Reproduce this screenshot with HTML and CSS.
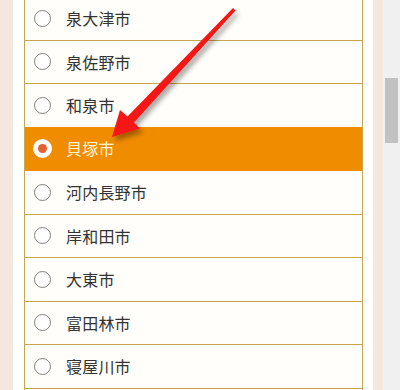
FILE: index.html
```html
<!DOCTYPE html>
<html lang="ja">
<head>
<meta charset="utf-8">
<link rel="stylesheet" href="styles.css">
</head>
<body>
<div class="page">
  <div class="side side-left"></div>
  <div class="gap gap-left"></div>
  <ul class="list">
    <li class="row"><span class="radio"></span><span class="label">泉大津市</span></li>
    <li class="row"><span class="radio"></span><span class="label">泉佐野市</span></li>
    <li class="row"><span class="radio"></span><span class="label">和泉市</span></li>
    <li class="row selected"><span class="radio"></span><span class="label">貝塚市</span></li>
    <li class="row"><span class="radio"></span><span class="label">河内長野市</span></li>
    <li class="row"><span class="radio"></span><span class="label">岸和田市</span></li>
    <li class="row"><span class="radio"></span><span class="label">大東市</span></li>
    <li class="row"><span class="radio"></span><span class="label">富田林市</span></li>
    <li class="row"><span class="radio"></span><span class="label">寝屋川市</span></li>
  </ul>
  <div class="gap gap-right"></div>
  <div class="side side-right"></div>
  <div class="scrollbar"><div class="thumb"></div></div>
</div>
<svg class="arrow" width="400" height="390" viewBox="0 0 400 390" xmlns="http://www.w3.org/2000/svg">
  <defs>
    <filter id="shadow" x="-20%" y="-20%" width="140%" height="140%">
      <feDropShadow dx="3" dy="4" stdDeviation="2.5" flood-color="#000" flood-opacity="0.35"/>
    </filter>
  </defs>
  <polygon filter="url(#shadow)" fill="#f51616" points="112,137 120,110 127.5,116.5 233,8 235.5,10.5 134,122.5 140,128.5"/>
</svg>
</body>
</html>
```
FILE: styles.css
```css
* { box-sizing: border-box; }
html, body {
  margin: 0;
  padding: 0;
  width: 400px;
  height: 390px;
  overflow: hidden;
  background: #ffffff;
  font-family: "Noto Sans CJK JP", "Noto Sans", sans-serif;
}
.page {
  display: flex;
  height: 390px;
  position: relative;
}
.side {
  background: #f4e7dd;
  flex: none;
}
.side-left { width: 13px; }
.side-right { width: 10px; }
.gap { flex: none; background: #ffffff; }
.gap-left { width: 11px; }
.gap-right { width: 10px; }
.list {
  list-style: none;
  margin: -3px 0 0 0;
  padding: 0;
  width: 339px;
  flex: none;
  border-left: 1px solid #c6a651;
  border-right: 1px solid #c6a651;
  background: #fffefa;
  align-self: stretch;
  height: 396px;
}
.row {
  height: 43.5px;
  border-bottom: 1px solid #c6a651;
  display: flex;
  align-items: center;
  padding-left: 9px;
  gap: 15px;
  color: #333333;
  font-size: 16px;
}
.row.selected {
  background: #f08c00;
  border-bottom-color: #f08c00;
  margin-top: -1px;
  height: 44.5px;
  color: #fff4d8;
}
.radio {
  width: 17px;
  height: 17px;
  border-radius: 50%;
  border: 1px solid #808080;
  background: #ffffff;
  flex: none;
  display: flex;
  align-items: center;
  justify-content: center;
}
.row.selected .radio {
  width: 19px;
  height: 19px;
  margin-left: -1px;
  margin-right: -1px;
  border: 1px solid #ffffff;
}
.row.selected .radio::after {
  content: "";
  width: 9px;
  height: 9px;
  border-radius: 50%;
  background: #e6622c;
}
.label {
  line-height: 1;
  letter-spacing: 0.2px;
}
.scrollbar {
  flex: none;
  width: 17px;
  background: #f0f0f0;
  padding: 78px 2px 0 2px;
}
.thumb {
  height: 65px;
  background: #c1c1c1;
}
.arrow {
  position: absolute;
  left: 0;
  top: 0;
  pointer-events: none;
}
```
